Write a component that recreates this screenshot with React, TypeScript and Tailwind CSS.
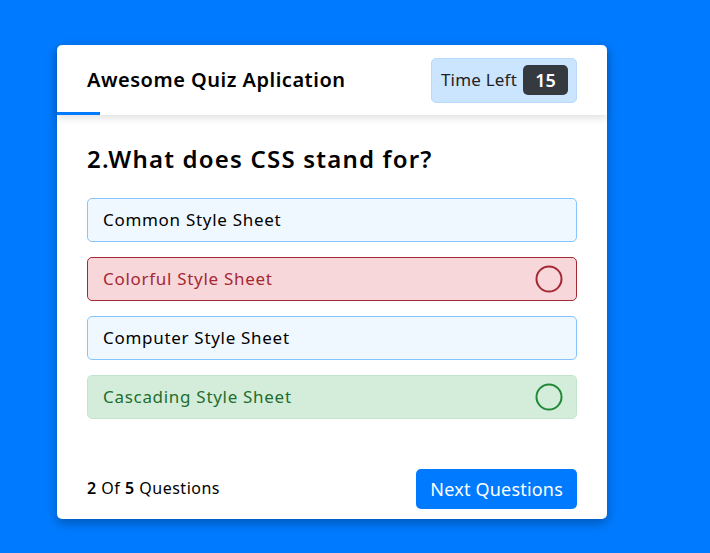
import { Circle } from "lucide-react";

type Option = {
  text: string;
  state: "idle" | "wrong" | "correct";
};

const options: Option[] = [
  { text: "Common Style Sheet", state: "idle" },
  { text: "Colorful Style Sheet", state: "wrong" },
  { text: "Computer Style Sheet", state: "idle" },
  { text: "Cascading Style Sheet", state: "correct" },
];

const optionStyles = {
  idle: "bg-[#f0f8ff] border-[#84c5fe] text-black",
  wrong: "bg-[#f8d7da] border-[#a42834] text-[#a42834]",
  correct: "bg-[#d4edda] border-[#c3e6cb] text-[#1e6e2e]",
};

const App = () => {
  return (
    <div className="min-h-[553px] bg-[#007bff] pt-[45px] pl-[57px] font-['Noto_Sans',sans-serif]">
      <div className="w-[550px] h-[474px] bg-white rounded-[5px] shadow-[0_4px_12px_rgba(0,0,0,0.3)] flex flex-col">
        <header className="relative h-[70px] flex items-center justify-between px-[30px] shadow-[0_3px_8px_rgba(0,0,0,0.12)]">
          <h1 className="text-[20px] font-semibold text-black tracking-[0.5px]">Awesome Quiz Aplication</h1>
          <div className="flex items-center gap-[6px] h-[45px] pl-[9px] pr-[8px] bg-[#cce5ff] border border-[#b8daff] rounded-[5px]">
            <span className="text-[17px] text-[#222] tracking-[0.2px]">Time Left</span>
            <span className="flex items-center justify-center w-[45px] h-[30px] bg-[#343a40] text-white text-[18px] font-semibold rounded-[5px]">
              15
            </span>
          </div>
          <span className="absolute left-0 bottom-0 w-[43px] h-[3px] bg-[#007bff]" />
        </header>

        <section className="px-[30px] pt-[26px]">
          <h2 className="text-[24px] font-semibold text-black leading-[36px] tracking-[1.2px]">2.What does CSS stand for?</h2>
          <div className="mt-[21px] flex flex-col gap-[15px]">
            {options.map(({ text, state }) => (
              <div
                key={text}
                className={`flex items-center justify-between h-[44px] px-[15px] border rounded-[5px] text-[17px] tracking-[0.7px] ${optionStyles[state]}`}
              >
                <span>{text}</span>
                {state === "wrong" && <Circle size={30} strokeWidth={1.6} className="text-[#a42834] -mr-[3px]" />}
                {state === "correct" && <Circle size={30} strokeWidth={1.6} className="text-[#218838] -mr-[3px]" />}
              </div>
            ))}
          </div>
        </section>

        <footer className="mt-auto mb-[10px] px-[30px] flex items-center justify-between">
          <span className="text-[16px] text-black tracking-[0.5px] -mt-[2px]">
            <span className="font-semibold">2</span> Of <span className="font-semibold">5</span> Questions
          </span>
          <button className="h-[40px] px-[14px] bg-[#007bff] text-white text-[18px] rounded-[5px] tracking-[0.2px]">
            Next Questions
          </button>
        </footer>
      </div>
    </div>
  );
};

export default App;
